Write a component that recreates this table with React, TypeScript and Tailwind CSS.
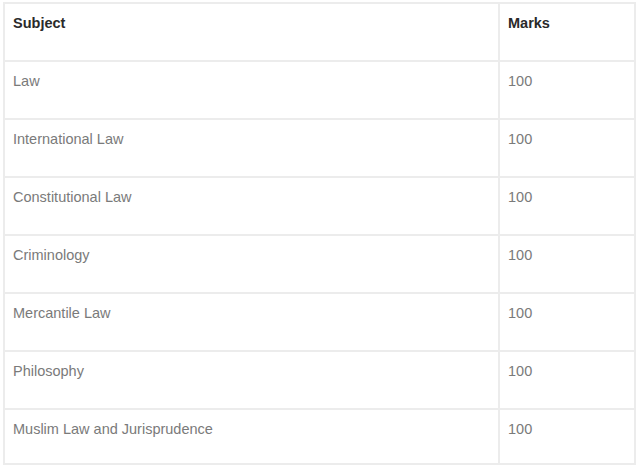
const rows = [
  "Law",
  "International Law",
  "Constitutional Law",
  "Criminology",
  "Mercantile Law",
  "Philosophy",
  "Muslim Law and Jurisprudence",
];

export default function App() {
  return (
    <div className="min-h-[465px] bg-white pl-[3px] pt-[2px] font-['Liberation_Sans',Arial,sans-serif] text-[14.5px]">
      <table className="w-[633px] border-collapse">
        <thead>
          <tr className="h-[58px]">
            <th className="w-[495px] border-2 border-[#ececec] px-[8px] pt-[9px] text-left align-top font-bold text-[#2a2a2a]">
              Subject
            </th>
            <th className="border-2 border-[#ececec] px-[8px] pt-[9px] text-left align-top font-bold text-[#2a2a2a]">
              Marks
            </th>
          </tr>
        </thead>
        <tbody>
          {rows.map((subject, i) => (
            <tr key={subject} className={i === rows.length - 1 ? "h-[55px]" : "h-[58px]"}>
              <td className="border-2 border-[#ececec] px-[8px] pt-[9px] align-top text-[#7a7a7a]">
                {subject}
              </td>
              <td className="border-2 border-[#ececec] px-[8px] pt-[9px] align-top text-[#7a7a7a]">
                100
              </td>
            </tr>
          ))}
        </tbody>
      </table>
    </div>
  );
}
